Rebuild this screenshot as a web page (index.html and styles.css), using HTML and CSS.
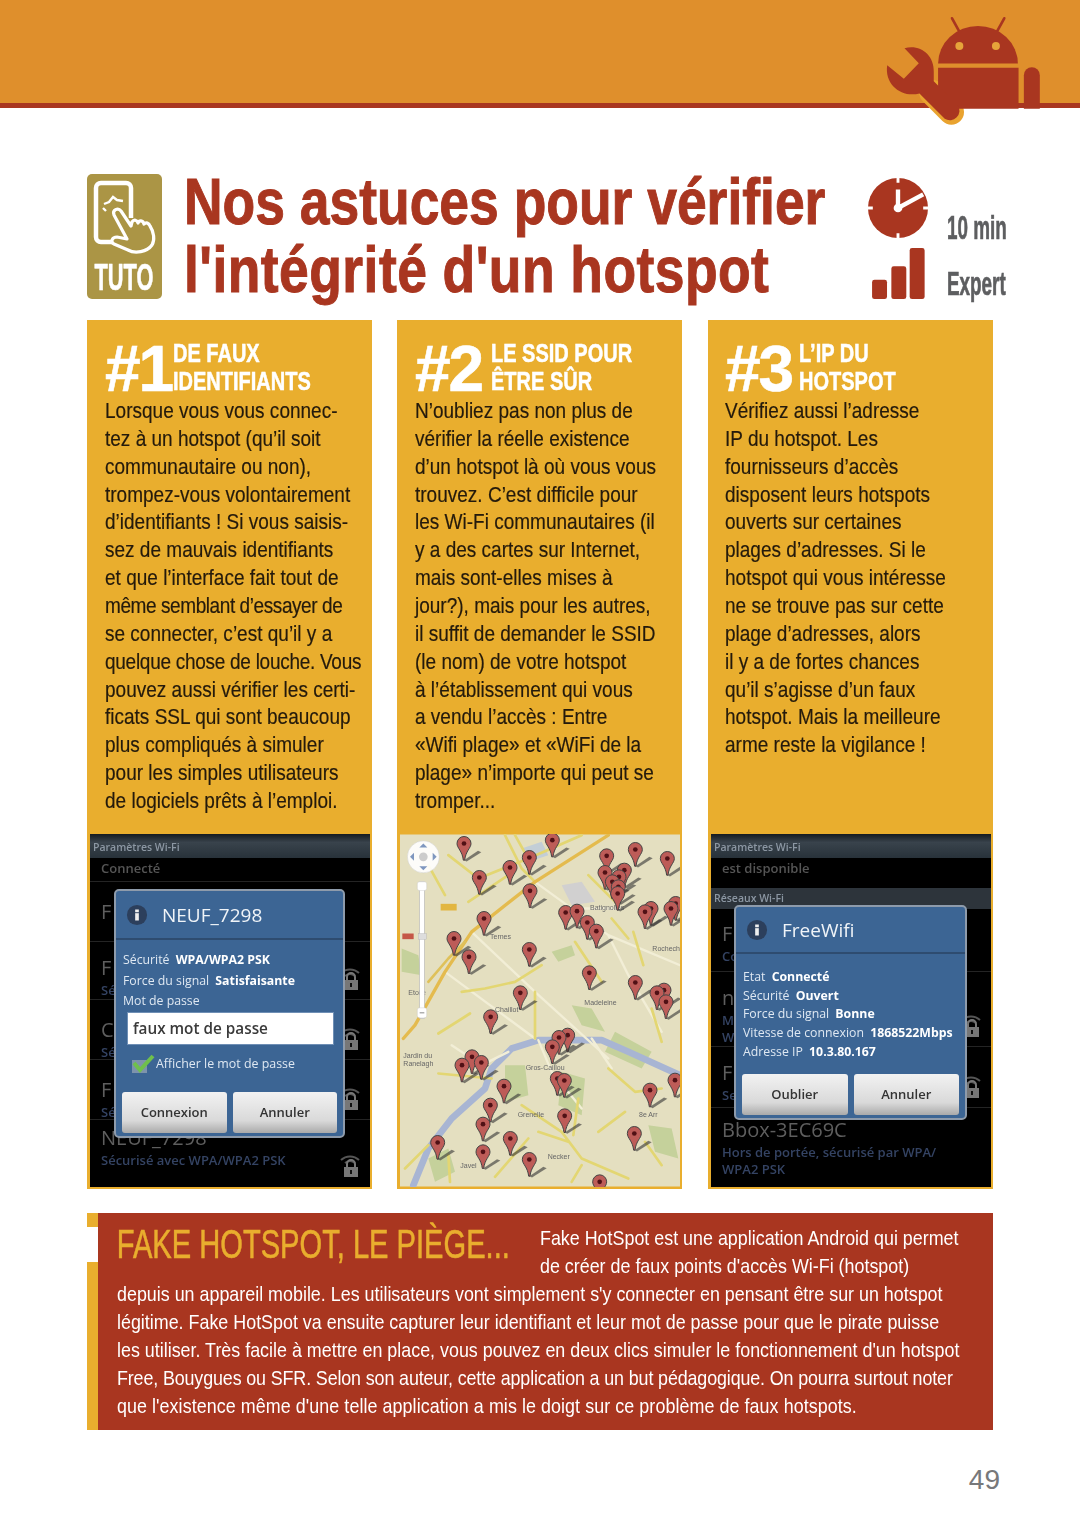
FILE: index.html
```html
<!DOCTYPE html>
<html lang="fr">
<head>
<meta charset="utf-8">
<title>Nos astuces pour vérifier l'intégrité d'un hotspot</title>
<link rel="stylesheet" href="styles.css">
</head>
<body>
<svg class="defs" width="0" height="0">
  <defs>
    <symbol id="lock" viewBox="0 0 24 26">
      <path d="M3 8a13 13 0 0 1 18 0M7 11a8 8 0 0 1 10 0" fill="none" stroke="#555" stroke-width="2"/>
      <rect x="6" y="15" width="14" height="10" fill="#777"/>
      <path d="M9 15v-3a4 4 0 0 1 8 0v3" fill="none" stroke="#777" stroke-width="2"/>
      <rect x="12" y="18" width="2" height="4" fill="#111"/>
    </symbol>
    <symbol id="info" viewBox="0 0 24 24">
      <circle cx="12" cy="12" r="11" fill="#2c3f5c"/>
      <rect x="10" y="10" width="4" height="8" fill="#eee"/>
      <rect x="10" y="6" width="4" height="3" fill="#eee"/>
    </symbol>
    <g id="pin">
      <path d="M0 50L42 22L52 26L8 54Z" fill="#333" fill-opacity=".6"/>
      <path d="M-21 0a21 21 0 0 1 42 0c0 14-16 22-19 50h-4C-5 22-21 14-21 0Z" fill="#bd5c58" stroke="#444" stroke-width="3"/>
      <circle r="7" fill="#501015"/>
    </g>
  </defs>
</svg>
<main class="page">
  <header class="band">
    <svg class="robot" viewBox="0 0 660 400" aria-hidden="true">
      <path d="M215 278L274 337" stroke="#e9a32f" stroke-width="76" stroke-linecap="round"/>
      <path d="M276 55l22 40M433 55l-22 40" stroke="#a93620" stroke-width="8" stroke-linecap="round"/>
      <path d="M234 191a120 113 0 0 1 240 0Z" fill="#a93620"/>
      <circle cx="298" cy="138" r="12" fill="#e6a43a"/>
      <circle cx="408" cy="138" r="12" fill="#e6a43a"/>
      <path d="M234 204h242v123H234Z" fill="#a93620"/>
      <path d="M492 226a24 24 0 0 1 48 0v101h-48Z" fill="#a93620"/>
      <path d="M133 145C180 132 222 165 221 215L221 244L294 317A29 29 0 0 1 254 357L178 281C125 295 72 255 81 196L131 237L176 190Z" fill="#a93620"/>
    </svg>
  </header>

  <section class="intro">
    <div class="badge">
      <svg class="badge-icon" viewBox="0 0 75 85" aria-hidden="true">
        <path d="M28 68H14a5 5 0 0 1-5-5V14a5 5 0 0 1 5-5h25a5 5 0 0 1 5 5v30" fill="none" stroke="#fff" stroke-width="4.500"/>
        <path d="M17 30l5-2 4-5 4 3 6 1M19 37l-3-3" fill="none" stroke="#fff" stroke-width="2.400"/>
        <path d="M27 41C25 36 31 33 34 37L44 52L45 48C47 45 50 46 51 49C52 46 56 46 57 50C59 48 62 49 63 52C67 58 68 66 65 71C60 78 48 80 41 76L27 70C23 68 25 63 30 63L40 65Z" fill="#ab9545" stroke="#fff" stroke-width="3.200" stroke-linejoin="round"/>
      </svg>
      <span class="badge-label">TUTO</span>
    </div>
    <h1 class="title">Nos astuces pour vérifier<br><span class="title-wide">l'intégrité d'un hotspot</span></h1>
    <div class="meta">
      <div class="meta-row meta-time">
        <svg class="meta-icon" viewBox="0 0 64 64" aria-hidden="true">
          <circle cx="32" cy="32" r="31" fill="#a93620"/>
          <path d="M32 0v6M32 58v6M0 32h6M58 32h6" stroke="#fff" stroke-width="3"/>
          <path d="M32 32V13M32 32L58 18" stroke="#fff" stroke-width="4.500"/>
          <circle cx="32" cy="32" r="4.500" fill="#fff"/>
        </svg>
        <span class="meta-text">10 min</span>
      </div>
      <div class="meta-row meta-level">
        <svg class="meta-icon" viewBox="0 0 64 56" aria-hidden="true">
          <rect x="2" y="34" width="15.500" height="20" rx="2.500" fill="#a93620"/>
          <rect x="22" y="20" width="15.500" height="34" rx="2.500" fill="#a93620"/>
          <rect x="41" y="1" width="15.500" height="53" rx="2.500" fill="#a93620"/>
        </svg>
        <span class="meta-text">Expert</span>
      </div>
    </div>
  </section>

  <section class="columns">
    <article class="tip">
      <div class="tip-body">
        <h2 class="tip-head"><span class="tip-num tip-num-one">#1</span><span class="tip-label">DE FAUX<br>IDENTIFIANTS</span></h2>
        <p class="tip-text">Lorsque vous vous connec-<br>tez à un hotspot (qu’il soit<br>communautaire ou non),<br>trompez-vous volontairement<br>d’identifiants ! Si vous saisis-<br>sez de mauvais identifiants<br>et que l’interface fait tout de<br><span class="tight-more">même semblant d’essayer de</span><br>se connecter, c’est qu’il y a<br><span class="tight">quelque chose de louche. Vous</span><br>pouvez aussi vérifier les certi-<br>ficats SSL qui sont beaucoup<br>plus compliqués à simuler<br>pour les simples utilisateurs<br>de logiciels prêts à l’emploi.</p>
      </div>
      <div class="shot phone">
        <div class="phone-bar">Paramètres Wi-Fi</div>
        <div class="row row-short"><span class="row-title small">Connecté</span></div>
        <div class="row row-60"><span class="row-title">F</span></div>
        <div class="row row-58"><span class="row-title">F</span><span class="row-sub">Sé</span><svg class="lock"><use href="#lock"/></svg></div>
        <div class="row row-60"><span class="row-title">C</span><span class="row-sub">Sé</span><svg class="lock"><use href="#lock"/></svg></div>
        <div class="row row-60"><span class="row-title">F</span><span class="row-sub">Sé</span><svg class="lock"><use href="#lock"/></svg></div>
        <div class="row row-last"><span class="row-title">NEUF_7298</span><span class="row-sub">Sécurisé avec WPA/WPA2 PSK</span><svg class="lock"><use href="#lock"/></svg></div>
        <div class="dialog dialog-one">
          <div class="dialog-title"><svg class="info"><use href="#info"/></svg>NEUF_7298</div>
          <div class="dialog-body">
            <div class="info-line">Sécurité <b>WPA/WPA2 PSK</b></div>
            <div class="info-line">Force du signal <b>Satisfaisante</b></div>
            <div class="info-line">Mot de passe</div>
            <div class="field">faux mot de passe</div>
            <div class="check">
              <svg class="tick" viewBox="0 0 24 20" aria-hidden="true">
                <rect x="1" y="6" width="15" height="13" fill="#7d93ac"/>
                <path d="M3 9l6 7L22 2" fill="none" stroke="#6fc04c" stroke-width="4"/>
              </svg>
              Afficher le mot de passe
            </div>
          </div>
          <div class="dialog-actions"><span class="btn">Connexion</span><span class="btn">Annuler</span></div>
        </div>
      </div>
    </article>

    <article class="tip">
      <div class="tip-body">
        <h2 class="tip-head"><span class="tip-num">#2</span><span class="tip-label">LE SSID POUR<br>ÊTRE SÛR</span></h2>
        <p class="tip-text">N’oubliez pas non plus de<br>vérifier la réelle existence<br>d’un hotspot là où vous vous<br>trouvez. C’est difficile pour<br>les Wi-Fi communautaires (il<br>y a des cartes sur Internet,<br>mais sont-elles mises à<br>jour?), mais pour les autres,<br>il suffit de demander le SSID<br>(le nom) de votre hotspot<br>à l’établissement qui vous<br>a vendu l’accès : Entre<br>«Wifi plage» et «WiFi de la<br>plage» n’importe qui peut se<br>tromper...</p>
      </div>
      <div class="shot">
        <svg class="map" viewBox="15 28 840 1056" aria-hidden="true">
          <rect x="15" y="28" width="840" height="1056" fill="#e4dfc0"/>
          <path d="M660 620l110 60-30 50-110-50ZM330 720h60l10 90-70 20ZM500 740l70 20-10 110-70-30ZM760 900l70 10 20 90-70-20ZM100 1000l60-30 20 70-60 30ZM530 540l60 10 40 70-70-20ZM470 380l60-20 10 30-50 20ZM20 370l50 20 10 60-60-10Z" fill="#c5d19b"/>
          <path d="M500 180l60-10 40 60-70 10Z" fill="#d1d0d0"/>
          <path d="M380 70l60-20 20 40-60 20Z" fill="#c3ced6"/>
          <g fill="none" stroke-linecap="round" stroke-linejoin="round">
            <path d="M855 750L700 680 620 645H430L350 670 290 730 270 790 170 880 100 970 55 1080" stroke="#a8b5d3" stroke-width="20"/>
            <path d="M170 660L260 720 340 680M430 645L470 740 560 850M590 640L650 730M560 250L680 250M640 330L700 450 800 620M150 440L420 640M230 320L420 500 640 700M420 170L640 330 855 420" stroke="#f2eed6" stroke-width="7"/>
            <path d="M330 30L380 130 420 170M100 120L150 210M160 90L250 160 400 100 560 30M220 230L340 150M360 30L405 110M540 350L620 470M715 320L745 420M770 550L800 650M420 500L420 640M130 625L225 565M200 500L270 490 360 470 440 420M640 730L720 800 800 790M550 820L535 930M430 920L520 950M610 920L690 860M750 950L800 1020M300 1055L400 940M160 990L165 1070M530 1070L560 1020M30 1030L100 960M130 745L290 760M380 840L500 920 560 1000 700 1060M580 150L670 240M650 280L700 340" stroke="#e3d672" stroke-width="8"/>
            <path d="M640 30L420 170 230 320 150 440 60 600 25 640" stroke="#e4bb4e" stroke-width="10"/>
            <path d="M100 470L160 400 210 350" stroke="#dfc15a" stroke-width="8"/>
          </g>
          <g class="map-labels">
            <text x="285" y="343">Ternes</text><text x="300" y="560">Chaillot</text>
            <text x="568" y="541">Madeleine</text><text x="392" y="735">Gros-Caillou</text>
            <text x="368" y="875">Grenelle</text><text x="458" y="1002">Necker</text>
            <text x="196" y="1028">Javel</text><text x="585" y="255">Batignolles</text>
            <text x="772" y="378">Rochech</text><text x="25" y="700">Jardin du</text>
            <text x="25" y="722">Ranelagh</text><text x="40" y="510">Etoile</text>
            <text x="732" y="877">8e Arr</text>
          </g>
          <g>
            <use href="#pin" x="207" y="55"/><use href="#pin" x="472" y="45"/><use href="#pin" x="403" y="97"/><use href="#pin" x="345" y="127"/><use href="#pin" x="253" y="157"/><use href="#pin" x="405" y="197"/><use href="#pin" x="635" y="92"/><use href="#pin" x="721" y="73"/><use href="#pin" x="817" y="100"/><use href="#pin" x="630" y="142"/><use href="#pin" x="688" y="135"/><use href="#pin" x="672" y="155"/><use href="#pin" x="652" y="170"/><use href="#pin" x="670" y="185"/><use href="#pin" x="668" y="205"/><use href="#pin" x="768" y="250"/><use href="#pin" x="750" y="260"/><use href="#pin" x="842" y="235"/><use href="#pin" x="828" y="250"/><use href="#pin" x="512" y="262"/><use href="#pin" x="546" y="258"/><use href="#pin" x="577" y="292"/><use href="#pin" x="604" y="318"/><use href="#pin" x="267" y="280"/><use href="#pin" x="177" y="340"/><use href="#pin" x="222" y="395"/><use href="#pin" x="403" y="373"/><use href="#pin" x="583" y="443"/><use href="#pin" x="721" y="472"/><use href="#pin" x="807" y="495"/><use href="#pin" x="786" y="503"/><use href="#pin" x="813" y="530"/><use href="#pin" x="376" y="503"/><use href="#pin" x="287" y="575"/><use href="#pin" x="518" y="630"/><use href="#pin" x="492" y="637"/><use href="#pin" x="472" y="665"/><use href="#pin" x="231" y="695"/><use href="#pin" x="259" y="712"/><use href="#pin" x="201" y="720"/><use href="#pin" x="327" y="783"/><use href="#pin" x="487" y="760"/><use href="#pin" x="508" y="766"/><use href="#pin" x="765" y="795"/><use href="#pin" x="840" y="765"/><use href="#pin" x="286" y="840"/><use href="#pin" x="509" y="872"/><use href="#pin" x="264" y="897"/><use href="#pin" x="718" y="925"/><use href="#pin" x="128" y="952"/><use href="#pin" x="346" y="940"/><use href="#pin" x="264" y="980"/><use href="#pin" x="403" y="1003"/><use href="#pin" x="614" y="1070"/>
          </g>
          <circle cx="85" cy="95" r="48" fill="#fff" fill-opacity=".9" stroke="#bbb"/>
          <path d="M85 55l-12 12h24ZM85 135l-12-12h24ZM45 95l12-12v24ZM125 95l-12-12v24Z" fill="#7f97bf"/>
          <circle cx="85" cy="95" r="13" fill="#ccc"/>
          <rect x="74" y="170" width="14" height="410" fill="#fff" stroke="#bbb" stroke-width="2"/>
          <rect x="67" y="170" width="28" height="26" rx="6" fill="#fff" stroke="#bbb"/>
          <rect x="70" y="325" width="24" height="18" fill="#ddd" stroke="#aaa"/>
          <rect x="67" y="548" width="28" height="30" rx="6" fill="#fff" stroke="#bbb"/>
          <path d="M74 563h14" stroke="#888" stroke-width="3"/>
          <rect x="137" y="236" width="48" height="20" fill="#e2b640"/>
          <rect x="22" y="325" width="34" height="17" fill="#c55747"/>
        </svg>
      </div>
    </article>

    <article class="tip tip-last">
      <div class="tip-body">
        <h2 class="tip-head"><span class="tip-num">#3</span><span class="tip-label">L’IP DU<br>HOTSPOT</span></h2>
        <p class="tip-text">Vérifiez aussi l’adresse<br>IP du hotspot. Les<br>fournisseurs d’accès<br>disposent leurs hotspots<br>ouverts sur certaines<br>plages d’adresses. Si le<br>hotspot qui vous intéresse<br>ne se trouve pas sur cette<br>plage d’adresses, alors<br>il y a de fortes chances<br>qu’il s’agisse d’un faux<br>hotspot. Mais la meilleure<br>arme reste la vigilance !</p>
      </div>
      <div class="shot phone">
        <div class="phone-bar">Paramètres Wi-Fi</div>
        <div class="row row-avail"><span class="row-title small">est disponible</span></div>
        <div class="phone-sec">Réseaux Wi-Fi</div>
        <div class="row row-63"><span class="row-title">F</span><span class="row-sub">Co</span></div>
        <div class="row row-75"><span class="row-title">n</span><span class="row-sub">M<br>W</span><svg class="lock"><use href="#lock"/></svg></div>
        <div class="row row-61"><span class="row-title">F</span><span class="row-sub">Se</span><svg class="lock"><use href="#lock"/></svg></div>
        <div class="row row-end"><span class="row-title">Bbox-3EC69C</span><span class="row-sub">Hors de portée, sécurisé par WPA/<br>WPA2 PSK</span></div>
        <div class="dialog dialog-two">
          <div class="dialog-title dialog-title-low"><svg class="info"><use href="#info"/></svg>FreeWifi</div>
          <div class="dialog-body dialog-body-list">
            <div class="info-line">Etat <b>Connecté</b></div>
            <div class="info-line">Sécurité <b>Ouvert</b></div>
            <div class="info-line">Force du signal <b>Bonne</b></div>
            <div class="info-line">Vitesse de connexion <b>1868522Mbps</b></div>
            <div class="info-line">Adresse IP <b>10.3.80.167</b></div>
          </div>
          <div class="dialog-actions"><span class="btn">Oublier</span><span class="btn">Annuler</span></div>
        </div>
      </div>
    </article>
  </section>

  <aside class="callout">
    <span class="callout-notch"></span>
    <div class="callout-inner">
      <h2 class="callout-title"><span class="callout-title-text">FAKE HOTSPOT, LE PIÈGE...</span></h2>
      <p class="callout-text">Fake HotSpot est une application Android qui permet<br>de créer de faux points d'accès Wi-Fi (hotspot)<br>depuis un appareil mobile. Les utilisateurs vont simplement s'y connecter en pensant être sur un hotspot<br>légitime. Fake HotSpot va ensuite capturer leur identifiant et leur mot de passe pour que le pirate puisse<br>les utiliser. Très facile à mettre en place, vous pouvez en deux clics simuler le fonctionnement d'un hotspot<br><span class="callout-tight">Free, Bouygues ou SFR. Selon son auteur, cette application a un but pédagogique. On pourra surtout noter</span><br><span class="callout-wide">que l'existence même d'une telle application a mis le doigt sur ce problème de faux hotspots.</span></p>
    </div>
  </aside>

  <footer class="folio">49</footer>
</main>
</body>
</html>
```

FILE: styles.css
```css
* { box-sizing: border-box; }
html, body { margin: 0; padding: 0; background: #fff; }
body { font-family: "Liberation Sans", sans-serif; color: #222; }
.defs { position: absolute; }
.page { width: 1080px; height: 1517px; overflow: hidden; display: flex; flex-direction: column; }

/* top band */
.band { position: relative; height: 108px; flex: none; background: #df8f2c; border-bottom: 5px solid #a93620; }
.robot { position: absolute; left: 860px; top: 0; width: 220px; height: 133px; }

/* title row */
.intro { display: flex; margin: 66px 73px 0 87px; height: 125px; flex: none; }
.badge { width: 75px; height: 125px; flex: none; background: #ab9545; border-radius: 5px; display: flex; flex-direction: column; align-items: center; }
.badge-icon { width: 75px; height: 85px; flex: none; }
.badge-label { font-weight: 700; font-size: 37px; line-height: 37px; color: #fff; display: block; transform: scaleX(.59); -webkit-text-stroke: .6px #fff; }
.title { margin: -6px 0 0 22px; flex: 1 1 0; min-width: 0; font-size: 65px; line-height: 68px; font-weight: 700; color: #a93620; white-space: nowrap; transform: scaleX(.822); transform-origin: 0 0; -webkit-text-stroke: 1px #a93620; }
.title-wide { letter-spacing: .55px; }
.meta { display: flex; flex-direction: column; flex: none; width: 140px; }
.meta-row { display: flex; }
.meta-time { height: 74px; align-items: flex-end; }
.meta-level { height: 51px; align-items: flex-end; }
.meta-icon { width: 62px; flex: none; }
.meta-time .meta-icon { height: 64px; margin-bottom: 8px; }
.meta-level .meta-icon { height: 54px; margin: 0 -3px -2px 3px; }
.meta-text { margin: 0 0 4px 18px; font-size: 34px; line-height: 34px; font-weight: 700; color: #5d5e60; white-space: nowrap; transform: scaleX(.555); transform-origin: 0 0; -webkit-text-stroke: .7px #5d5e60; }
.meta-level .meta-text { margin-bottom: -1px; }

/* three tips */
.columns { display: grid; grid-template-columns: 285px 285px 286px; column-gap: 25px; margin: 21px 87px 0; height: 869px; flex: none; }
.tip { background: #e9ae2e; display: flex; flex-direction: column; padding: 0 2px 2px 3px; min-width: 0; }
.tip-last { margin-left: 1px; }
.tip-body { flex: 1; padding: 17px 0 0 15px; }
.tip-last .tip-body { padding-left: 14px; }
.tip-head { margin: 0; display: flex; align-items: flex-start; color: #fff; font-weight: 700; }
.tip-num { margin-top: 2px; font-size: 64px; line-height: 60px; letter-spacing: -2px; -webkit-text-stroke: .6px #fff; }
.tip-num-one { margin-right: -8px; }
.tip-label { margin: 3px 0 0 9px; font-size: 25px; line-height: 27.500px; white-space: nowrap; transform: scaleX(.8); transform-origin: 0 0; -webkit-text-stroke: .5px #fff; }
.tip-last .tip-label { margin-left: 7px; }
.tip-text { margin: -2px 0 0; font-size: 22.500px; line-height: 27.860px; white-space: nowrap; color: #241a0c; transform: scaleX(.845); transform-origin: 0 0; -webkit-text-stroke: .2px #241a0c; }
.tight { letter-spacing: -.33px; }
.tight-more { letter-spacing: -.5px; }

/* screenshots */
.shot { height: 353px; flex: none; position: relative; overflow: hidden; }
.map { display: block; width: 280px; height: 353px; filter: blur(.5px); }
.map-labels { font-size: 21px; fill: #666; }

.phone { background: #000; font-family: "Open Sans", sans-serif; filter: blur(.35px); }
.phone-bar { height: 24px; background: linear-gradient(#141a20, #39434c 35%, #28323a); color: #8c97a3; font-size: 10.500px; font-weight: 600; line-height: 27px; padding-left: 3px; }
.phone-sec { height: 21px; background: #2d343b; color: #8c97a3; font-size: 10.500px; font-weight: 600; line-height: 20px; padding-left: 3px; }
.row { position: relative; border-bottom: 1px solid #242424; padding-left: 11px; color: #5e5e5e; overflow: hidden; }
.row-short { height: 24px; }
.row-avail { height: 30px; border: 0; }
.row-60 { height: 60px; padding-top: 18px; }
.row-58 { height: 58px; padding-top: 14px; }
.row-63 { height: 63px; padding-top: 13px; }
.row-75 { height: 75px; padding-top: 14px; }
.row-61 { height: 61px; padding-top: 14px; }
.row-last { height: 66px; padding-top: 6px; border: 0; }
.row-end { padding-top: 10px; border: 0; height: 80px; }
.row-title { display: block; font-size: 20px; line-height: 23px; }
.row-title.small { font-size: 13px; font-weight: 600; line-height: 20px; color: #555; }
.row-sub { display: block; margin-top: 3px; font-size: 13px; line-height: 17px; font-weight: 600; color: #344363; }
.lock { position: absolute; right: 8px; bottom: 8px; width: 24px; height: 26px; }

.dialog { position: absolute; background: #3c6594; border: 2px solid #8e9bab; border-radius: 5px; display: flex; flex-direction: column; color: #dfe8f2; }
.dialog-one { left: 24px; top: 55px; width: 231px; height: 249px; }
.dialog-two { left: 23px; top: 71px; width: 233px; height: 215px; }
.dialog-title { display: flex; align-items: center; gap: 14px; height: 49px; flex: none; padding-left: 10px; border-bottom: 2px solid #2e4c70; color: #f0f4f8; font-size: 19px; }
.dialog-title-low { height: 47px; }
.info { width: 22px; height: 22px; flex: none; }
.dialog-body { flex: 1; padding: 10px 0 0 7px; }
.dialog-body-list { padding-top: 14px; }
.info-line { font-size: 12.300px; line-height: 20.500px; white-space: nowrap; }
.dialog-body-list .info-line { line-height: 18.700px; }
.info-line b { margin-left: 3px; color: #fff; }
.field { margin: 0 9px 0 4px; height: 33px; background: #fff; color: #3a3a3a; font-size: 15.300px; font-weight: 600; line-height: 31px; padding-left: 5px; border: 1px solid #6f8fb5; }
.check { display: flex; align-items: center; gap: 1px; height: 38px; margin-left: 8px; font-size: 12.400px; white-space: nowrap; }
.tick { width: 24px; height: 20px; flex: none; }
.dialog-actions { display: flex; gap: 6px; height: 41px; flex: none; margin: 0 6px 3px; }
.btn { flex: 1; background: linear-gradient(#f2f2f2, #d9d9d9 70%, #aaa); border-radius: 3px; color: #333; font-size: 13px; font-weight: 600; text-align: center; line-height: 41px; }

/* callout */
.callout { position: relative; margin: 24px 87px 0; height: 217px; flex: none; background: #a93620; border-left: 11px solid #e9ae2e; }
.callout-notch { position: absolute; left: -11px; top: 14px; width: 11px; height: 35px; background: #fff; }
.callout-inner { width: 1050px; padding: 10px 0 0 22.300px; transform: scaleX(.8516); transform-origin: 0 0; }
.callout-title { float: left; width: 496.700px; margin: 0; font-size: 41px; line-height: 42px; font-weight: 400; color: #e9ae2e; white-space: nowrap; height: 56px; -webkit-text-stroke: .6px #e9ae2e; }
.callout-title-text { display: inline-block; transform: scaleX(.8337); transform-origin: 0 0; }
.callout-text { margin: 0; padding-top: 1px; color: #fff; font-size: 21px; line-height: 28px; white-space: nowrap; }
.callout-tight { letter-spacing: -.15px; }
.callout-wide { letter-spacing: .08px; }

/* folio */
.folio { margin: 30px 80px 0 0; text-align: right; font-size: 28px; line-height: 40px; color: #77787a; }
```
